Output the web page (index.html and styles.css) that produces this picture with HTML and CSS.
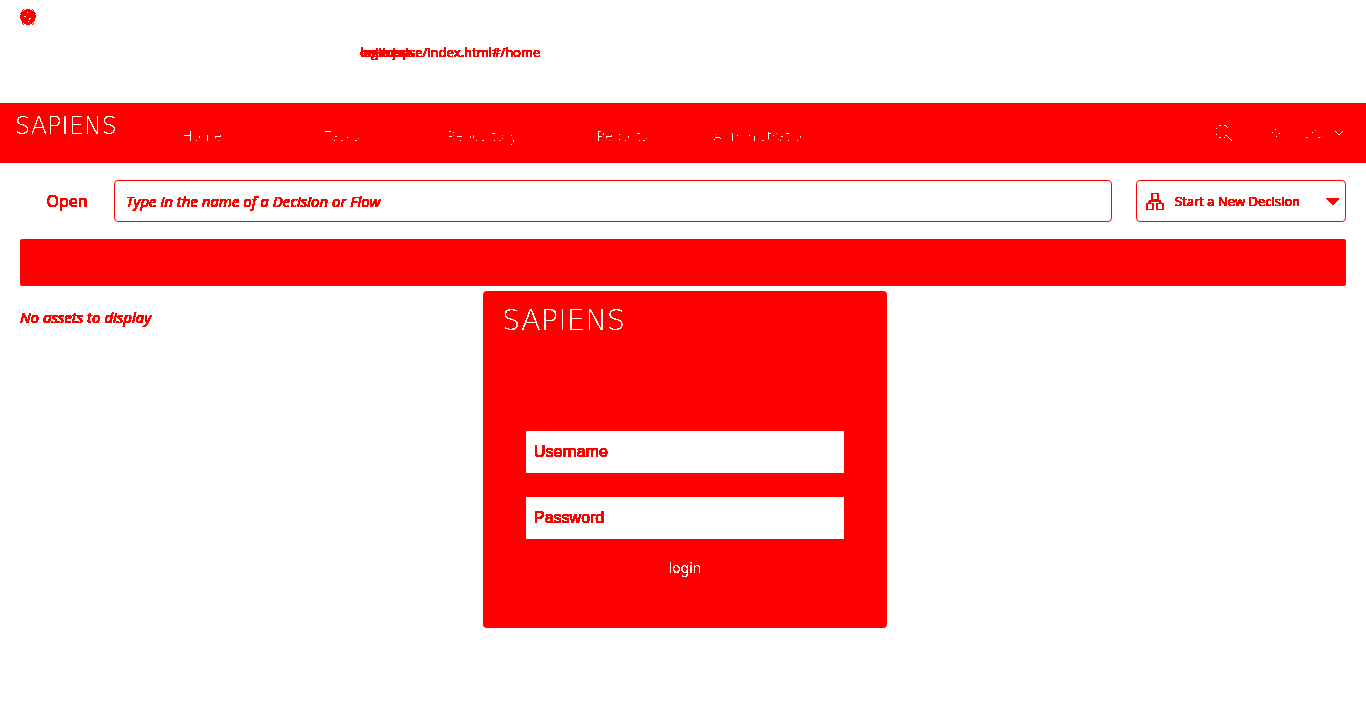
FILE: index.html
```
<!DOCTYPE html>
<html lang="en">
<head>
<meta charset="utf-8">
<title>Sapiens</title>
<link rel="stylesheet" href="styles.css">
</head>
<body>
<svg class="defs" aria-hidden="true">
  <filter id="heavy" x="-5%" y="-20%" width="110%" height="140%" color-interpolation-filters="sRGB"><feComponentTransfer><feFuncA type="linear" slope="60" intercept="0"/></feComponentTransfer></filter>
  <filter id="fine" x="-5%" y="-20%" width="110%" height="140%"><feComponentTransfer><feFuncA type="linear" slope="60" intercept="-59"/></feComponentTransfer></filter>
  <filter id="medium" x="-5%" y="-20%" width="110%" height="140%"><feComponentTransfer><feFuncA type="linear" slope="30" intercept="-13"/></feComponentTransfer></filter>
</svg>
<div class="browser">
  <svg class="favicon" viewBox="0 0 16 16" width="16" height="16" shape-rendering="crispEdges">
    <circle cx="8" cy="8" r="7.8"/>
    <path d="M2 1h1v1H2zM13 1h1v1h-1zM1 3h1v1H1zM14 3h1v1h-1zM3 0h1v1H3zM12 0h1v1h-1zM3 15h1v1H3zM12 15h1v1h-1zM2 14h1v1H2zM13 14h1v1h-1zM0 4h1v1H0zM15 4h1v1h-1z"/>
    <path class="spot" d="M7 3h1v1H7zM4 7h2v1H4zM9 9h2v1h-1v1H9zM8 12h1v1H8z"/>
  </svg>
  <div class="address heavy"><span>enterprise/index.html#/home</span><span class="over">login.jsp</span><span class="over">business</span></div>
</div>
<header class="bar">
  <div class="brand medium">SAPIENS</div>
  <nav class="nav fine">
    <a href="#home">Home</a><a href="#tasks">Tasks</a><a href="#repository">Repository</a><a href="#reports">Reports</a><a href="#administration">Administration</a>
  </nav>
  <div class="tools">
    <button class="plain" aria-label="Search"><svg width="18" height="18" viewBox="0 0 18 18" shape-rendering="crispEdges"><path d="M3 1h2v1H3zM8 1h2v1h1v1h1v1h-1V3h-1V2H8zM0 4h1v1H0zM0 10h1v1H0zM3 13h2v1H3zM8 13h1v1H8zM9 12h1v-1h1v1h1v1h1v1h1v1h1v1h1v1h-1v-1h-1v-1h-1v-1h-1v-1h-1v-1h-1v-1h-1v1H9z"/></svg></button>
    <button class="plain" aria-label="Settings"><svg width="8" height="8" viewBox="0 0 8 8" shape-rendering="crispEdges"><path d="M3 0h1v1H3zM0 3h1v1H0zM7 4h1v1H7zM4 7h1v1H4z"/></svg></button>
    <button class="plain user"><span class="fine">srs</span><svg width="8" height="4" viewBox="0 0 8 4" shape-rendering="crispEdges"><path d="M0 0h1v1h1v1h1v1h2V2h1V1h1V0h1v1H7v1H6v1H5v1H3V3H2V2H1V1H0z"/></svg></button>
  </div>
</header>
<main>
  <div class="open-row">
    <label class="heavy" for="asset">Open</label>
    <div class="field"><input id="asset" class="heavy" type="text" placeholder="Type in the name of a Decision or Flow"></div>
    <button class="start">
      <svg width="18" height="17" viewBox="0 0 18 17" shape-rendering="crispEdges"><path fill-rule="evenodd" fill="#f00" d="M5 0h8v7h2v2h1v1h2v7h-8v-7h3V9H5v1h3v7H0v-7h2V8h1V7h2zM7 1v5h4V1zM2 11v5h4v-5zM12 11v5h4v-5z"/></svg>
      <span class="heavy">Start a New Decision</span>
      <svg class="caret" width="13" height="7" viewBox="0 0 13 7" shape-rendering="crispEdges"><path d="M0 0h13v1L7 7H6L0 1z"/></svg>
    </button>
  </div>
  <div class="band"></div>
  <p class="empty heavy">No assets to display</p>
</main>
<form class="login">
  <div class="brand-large medium">SAPIENS</div>
  <div class="fields">
    <div class="box"><input class="heavy" type="text" placeholder="Username" aria-label="Username"></div>
    <div class="box"><input class="heavy" type="password" placeholder="Password" aria-label="Password"></div>
    <button class="submit" type="button"><span class="medium">login</span></button>
  </div>
</form>
</body>
</html>
```
FILE: styles.css
```
* { box-sizing: border-box; }
body { margin: 0; background: #fff; color: #f00; font: 14px/20px "Noto Sans", "Open Sans", sans-serif; }
input, button { font: inherit; color: inherit; margin: 0; padding: 0; border: 0; background: none; }
.defs { position: absolute; width: 0; height: 0; }
.heavy { filter: url(#heavy); }
.fine { filter: url(#fine); }
.medium { filter: url(#medium); }
.browser { height: 103px; padding: 9px 20px; font-family: "Open Sans", sans-serif; }
.favicon { display: block; fill: #f00; }
.favicon .spot { fill: #fff; }
.address { position: relative; width: 200px; margin: 17px 0 0 340px; font-size: 13px; white-space: nowrap; }
.over { position: absolute; left: 0; top: 0; }
.bar { display: flex; height: 60px; background: #f00; color: #fff; }
.brand { width: 132px; padding: 11px 0 0 15px; font: 200 24px/24px "DejaVu Sans", sans-serif; }
.nav { display: grid; grid-template-columns: repeat(5, 140px); padding-top: 23px; text-align: center; }
.nav a { color: #fff; text-decoration: none; }
.tools { display: flex; align-items: center; gap: 38px; margin-left: auto; padding-right: 23px; }
.tools svg { display: block; fill: #fff; }
.user { display: flex; align-items: center; gap: 12px; margin-left: -14px; }
.open-row { display: flex; align-items: center; padding: 17px 20px; font-family: "Open Sans", sans-serif; }
.open-row label { width: 94px; text-align: center; font-size: 16px; }
.field { flex: 1; height: 42px; border: 1px solid #f00; border-radius: 4px; }
.field input { width: 100%; height: 40px; padding-left: 11px; font-size: 15px; font-style: italic; }
input::placeholder { color: #f00; opacity: 1; }
.start { display: flex; align-items: center; width: 210px; height: 42px; margin-left: 24px; padding: 0 6px 0 9px; border: 1px solid #f00; border-radius: 4px; font-size: 13px; }
.start span { margin-left: 11px; white-space: nowrap; }
.caret { margin-left: auto; fill: #f00; }
.band { height: 47px; margin: 0 20px; border-radius: 2px; background: #f00; }
.empty { margin: 21px 20px; font: italic 15px/20px "Open Sans", sans-serif; }
.login { position: absolute; left: calc(50% - 200px); top: 291px; width: 404px; padding: 17px 43px 42px; border-radius: 4px; background: #f00; color: #fff; }
.brand-large { margin-left: -24px; font: 200 29px/24px "DejaVu Sans", sans-serif; }
.fields { display: grid; gap: 24px; padding-top: 99px; }
.box { height: 42px; background: #fff; }
.box input { width: 100%; height: 42px; padding: 0 8px; color: #f00; font: 16px "Liberation Sans", sans-serif; }
.submit { height: 20px; margin-top: -5px; margin-bottom: 8px; }
```
